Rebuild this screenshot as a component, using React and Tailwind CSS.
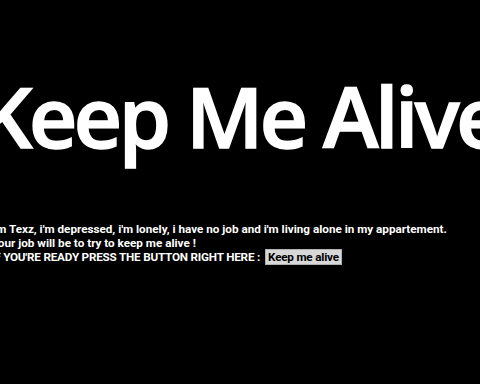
export default function App() {
  return (
    <div className="w-[480px] h-[384px] bg-black overflow-hidden text-white">
      <div className="flex justify-center pt-[61px] h-[200px]">
        <h1 className="whitespace-nowrap text-[84px] leading-[110px] font-semibold tracking-[-3.5px] [-webkit-text-stroke:1.5px_white]" style={{ fontFamily: '"Open Sans", sans-serif' }}>
          Keep Me Alive
        </h1>
      </div>
      <div className="-ml-[9px] pt-[22px] text-[11.7px] leading-[14px] font-bold whitespace-nowrap" style={{ fontFamily: 'Roboto, sans-serif' }}>
        <p>I'm Texz, i'm depressed, i'm lonely, i have no job and i'm living alone in my appartement.</p>
        <p>Your job will be to try to keep me alive !</p>
        <p className="flex items-center h-[14px] tracking-[-0.2px]">
          IF YOU'RE READY PRESS THE BUTTON RIGHT HERE :
          <button className="ml-[5px] px-[2px] h-[16px] bg-[#d8d8d8] border border-[#b0b0b0] text-black text-[11.7px] leading-[14px] font-bold tracking-[-0.2px]">Keep me alive</button>
        </p>
      </div>
    </div>
  );
}
